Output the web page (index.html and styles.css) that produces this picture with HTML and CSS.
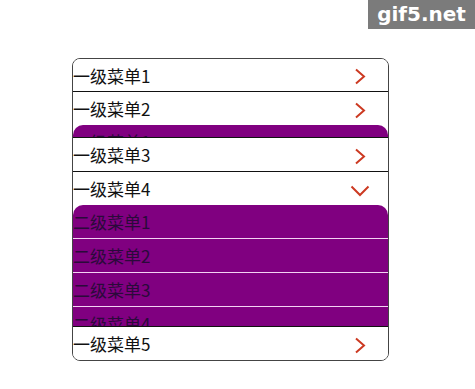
FILE: index.html
```html
<!DOCTYPE html>
<html lang="zh">
<head>
<meta charset="utf-8">
<title>Menu</title>
<link rel="stylesheet" href="styles.css">
</head>
<body>
<div class="watermark">gif5.net</div>
<div class="menu">
  <div class="item first">
    <span class="label">一级菜单1</span>
    <svg class="arrow" width="12" height="17" viewBox="0 0 12 17"><polyline points="2,1.5 10,8.5 2,15.5"/></svg>
  </div>
  <div class="item">
    <span class="label">一级菜单2</span>
    <svg class="arrow" width="12" height="17" viewBox="0 0 12 17"><polyline points="2,1.5 10,8.5 2,15.5"/></svg>
  </div>
  <div class="sub sub-closing">
    <div class="sub-item">二级菜单1</div>
    <div class="sub-item">二级菜单2</div>
  </div>
  <div class="item">
    <span class="label">一级菜单3</span>
    <svg class="arrow" width="12" height="17" viewBox="0 0 12 17"><polyline points="2,1.5 10,8.5 2,15.5"/></svg>
  </div>
  <div class="item">
    <span class="label">一级菜单4</span>
    <svg class="arrow down" width="20" height="12" viewBox="0 0 20 12"><polyline points="1.5,1.5 10,10 18.5,1.5"/></svg>
  </div>
  <div class="sub sub-open">
    <div class="sub-item">二级菜单1</div>
    <div class="sub-item">二级菜单2</div>
    <div class="sub-item">二级菜单3</div>
    <div class="sub-item">二级菜单4</div>
  </div>
  <div class="item">
    <span class="label">一级菜单5</span>
    <svg class="arrow" width="12" height="17" viewBox="0 0 12 17"><polyline points="2,1.5 10,8.5 2,15.5"/></svg>
  </div>
</div>
</body>
</html>
```

FILE: styles.css
```css
html, body {
  margin: 0;
  padding: 0;
  background: #ffffff;
}

body {
  font-family: "Noto Sans CJK SC", "Noto Sans", sans-serif;
  position: relative;
  width: 475px;
  height: 389px;
  overflow: hidden;
}

.watermark {
  position: absolute;
  top: 0;
  right: 0;
  width: 107px;
  height: 29px;
  background: #7b7b7b;
  color: #ffffff;
  font-family: "DejaVu Sans", "Liberation Sans", sans-serif;
  font-weight: bold;
  font-size: 20px;
  line-height: 28px;
  text-align: center;
}

.menu {
  box-sizing: border-box;
  width: 317px;
  margin: 58px 0 0 72px;
  border: 1px solid #444;
  border-radius: 8px;
  overflow: hidden;
  display: flex;
  flex-direction: column;
}

.item {
  display: flex;
  align-items: center;
  justify-content: space-between;
  height: 33px;
  border-top: 1px solid #111;
  padding-right: 22px;
  background: #fff;
  flex-shrink: 0;
}

.item.first {
  border-top: none;
  height: 32px;
}

.label {
  font-size: 17px;
  color: #111;
  line-height: 33px;
}

.arrow {
  fill: none;
  stroke: #cc3a22;
  stroke-width: 2;
  margin-top: 3px;
}

.arrow.down {
  margin-right: -4px;
  margin-top: 4px;
}

.sub {
  background: #800080;
  border-radius: 10px 10px 0 0;
  overflow: hidden;
  flex-shrink: 0;
}

.sub-closing {
  height: 12px;
}

.sub-open {
  height: 121px;
}

.sub-item {
  height: 33px;
  line-height: 33px;
  font-size: 17px;
  color: #2a0a3a;
  border-bottom: 1px solid #f3d2f3;
}
```
